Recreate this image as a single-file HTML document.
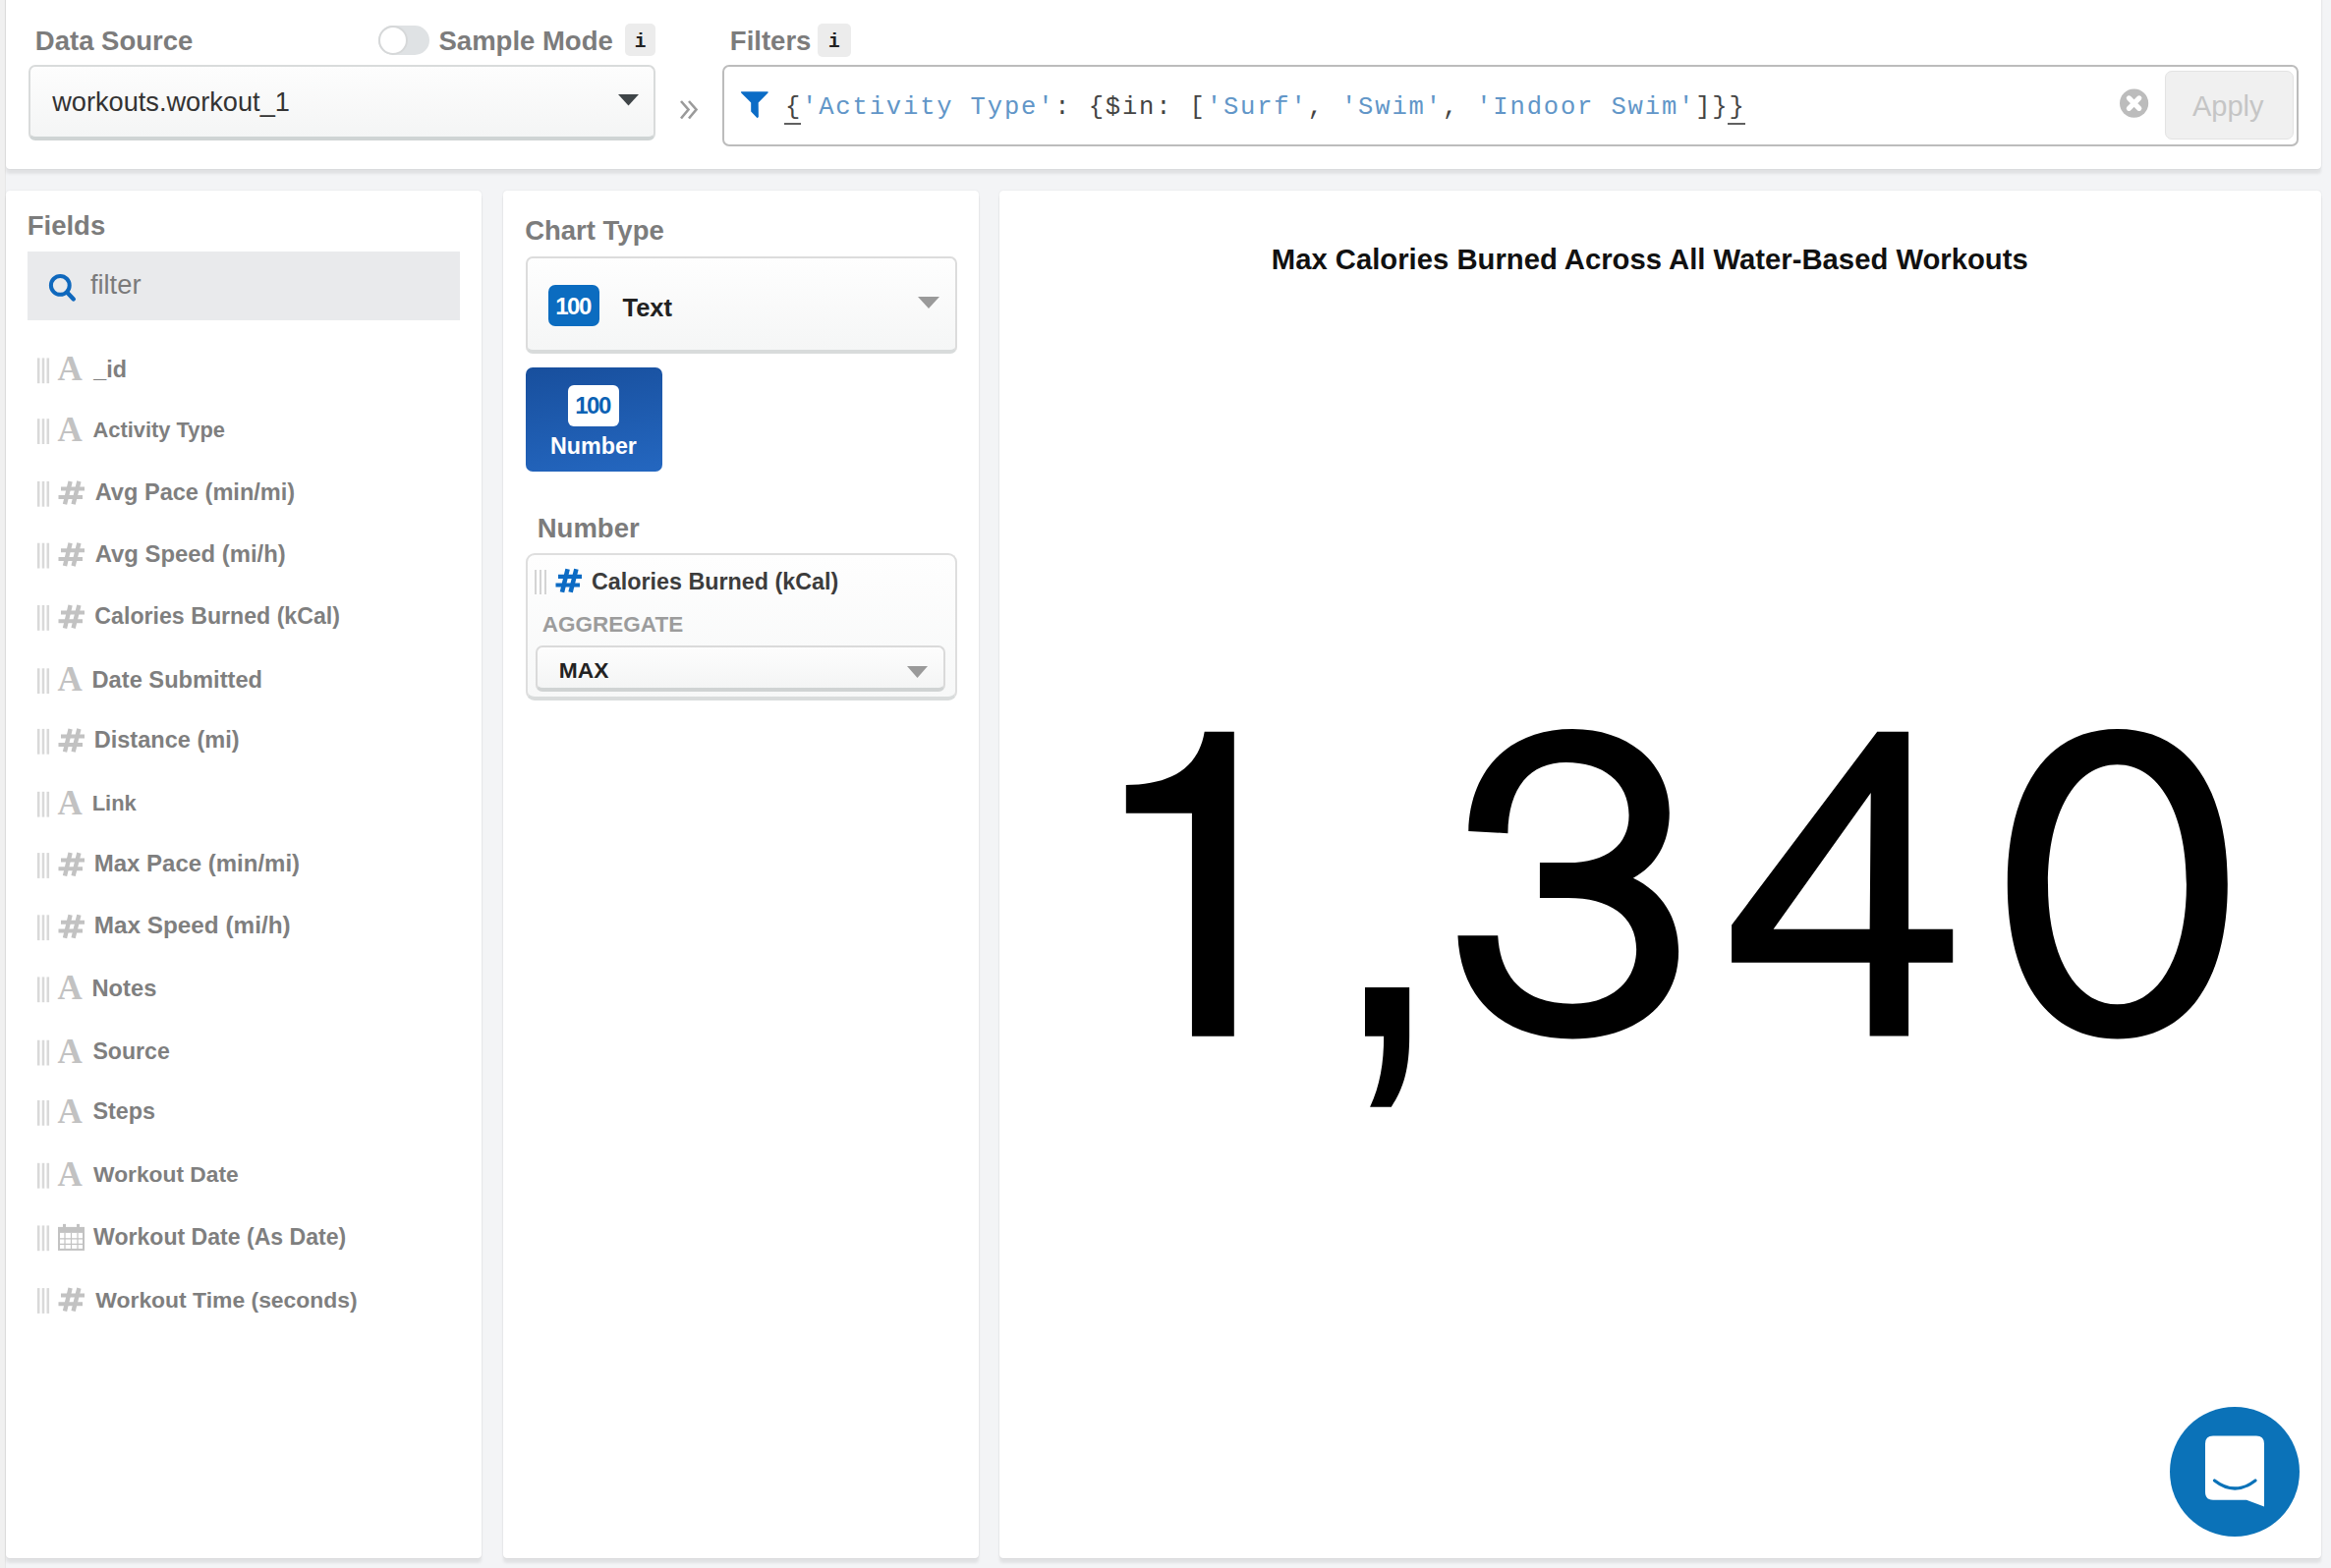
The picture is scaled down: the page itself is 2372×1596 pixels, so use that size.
<!DOCTYPE html><html><head><meta charset="utf-8"><style>
html,body{margin:0;padding:0;width:2372px;height:1596px;overflow:hidden;background:#f3f4f6;}
.t{position:absolute;line-height:0;white-space:pre;}
svg{position:absolute;left:0;top:0;}
</style></head><body>
<div style="position:absolute;left:0px;top:0px;width:5px;height:1596px;background:#f0f0f0;border-right:1px solid #e7e7e7;"></div>
<div style="position:absolute;left:6px;top:-10px;width:2356px;height:182px;background:#fff;border-radius:4px;box-shadow:0 0 1.5px rgba(0,0,0,0.12),0 5px 3px rgba(0,0,0,0.075);"></div>
<div style="position:absolute;left:6px;top:194px;width:484px;height:1392px;background:#fff;border-radius:4px;box-shadow:0 0 1.5px rgba(0,0,0,0.12),0 5px 3px rgba(0,0,0,0.075);"></div>
<div style="position:absolute;left:512px;top:194px;width:484px;height:1392px;background:#fff;border-radius:4px;box-shadow:0 0 1.5px rgba(0,0,0,0.12),0 5px 3px rgba(0,0,0,0.075);"></div>
<div style="position:absolute;left:1017px;top:194px;width:1345px;height:1392px;background:#fff;border-radius:4px;box-shadow:0 0 1.5px rgba(0,0,0,0.12),0 5px 3px rgba(0,0,0,0.075);"></div>
<div class="t" style="left:35.86px;top:42.17px;font-family:'Liberation Sans', sans-serif;font-size:27.5px;font-weight:700;color:#7c7c7c;">Data Source</div>
<div style="position:absolute;left:385px;top:26px;width:52px;height:30px;background:#dfe2e4;border-radius:15px;"></div>
<div style="position:absolute;left:385px;top:26px;width:30px;height:30px;background:#fff;border-radius:50%;box-sizing:border-box;border:2px solid #d6d8d9;"></div>
<div class="t" style="left:446.51px;top:42.17px;font-family:'Liberation Sans', sans-serif;font-size:27.5px;font-weight:700;color:#7c7c7c;">Sample Mode</div>
<div style="position:absolute;left:636px;top:24px;width:31px;height:33px;background:#ececec;border-radius:5px;"></div>
<div class="t" style="left:645.78px;top:42.61px;font-family:'Liberation Mono', monospace;font-size:19.5px;font-weight:700;color:#222;">i</div>
<div style="position:absolute;left:29px;top:66px;width:638px;height:77px;box-sizing:border-box;border:2px solid #d9dbdb;border-bottom:4px solid #cfd4d4;border-radius:7px;background:linear-gradient(#fdfdfd,#f4f5f5);"></div>
<div class="t" style="left:53.14px;top:104.07px;font-family:'Liberation Sans', sans-serif;font-size:27.2px;font-weight:400;color:#333;">workouts.workout_1</div>
<svg width="2372" height="1596" style="pointer-events:none"><polygon points="629,96 650,96 639.5,107.5" fill="#3f4548"/><polyline points="693,103 700.5,111.5 693,120.5" fill="none" stroke="#9a9a9a" stroke-width="2.6"/><polyline points="701,103 708.5,111.5 701,120.5" fill="none" stroke="#9a9a9a" stroke-width="2.6"/></svg>
<div class="t" style="left:742.86px;top:42.17px;font-family:'Liberation Sans', sans-serif;font-size:27.5px;font-weight:700;color:#7c7c7c;">Filters</div>
<div style="position:absolute;left:832px;top:24px;width:34px;height:34px;background:#ececec;border-radius:5px;"></div>
<div class="t" style="left:842.98px;top:42.61px;font-family:'Liberation Mono', monospace;font-size:19.5px;font-weight:700;color:#222;">i</div>
<div style="position:absolute;left:735px;top:66px;width:1604px;height:83px;box-sizing:border-box;border:2px solid #bcbcbc;border-radius:7px;background:#fff;"></div>
<svg width="2372" height="1596"><path d="M754.5,93.2 Q753.5,93.5 754.2,94.6 L764.2,104.4 L764.2,113.6 L770.6,120.2 L771.9,119 L771.7,104.4 L781.5,94.6 Q782.2,93.5 781,93.2 Z" fill="#0b6cc6"/></svg>
<div class="t" style="left:798.92px;top:109.81px;font-family:'Liberation Mono', monospace;font-size:25.5px;font-weight:400;letter-spacing:1.850px"><span style="color:#444">{</span><span style="color:#6196c8">'Activity Type'</span><span style="color:#444">: {$in: [</span><span style="color:#6196c8">'Surf'</span><span style="color:#444">, </span><span style="color:#6196c8">'Swim'</span><span style="color:#444">, </span><span style="color:#6196c8">'Indoor Swim'</span><span style="color:#444">]}}</span></div>
<div style="position:absolute;left:798px;top:125.2px;width:17px;height:2.200000000000003px;background:#606060;"></div>
<div style="position:absolute;left:1758px;top:125.2px;width:18px;height:2.200000000000003px;background:#606060;"></div>
<svg width="2372" height="1596"><circle cx="2171.6" cy="105.1" r="14.6" fill="#bcbcbc"/><path d="M2166.4,99.9 L2176.8,110.3 M2176.8,99.9 L2166.4,110.3" stroke="#fff" stroke-width="5.2" stroke-linecap="round"/></svg>
<div style="position:absolute;left:2203px;top:72px;width:131px;height:69.5px;box-sizing:border-box;border:1px solid #e3e3e3;border-radius:7px;background:#f0f0f0;"></div>
<div class="t" style="left:2230.94px;top:107.65px;font-family:'Liberation Sans', sans-serif;font-size:29px;font-weight:400;color:#c5c5c5;">Apply</div>
<div class="t" style="left:27.76px;top:230.47px;font-family:'Liberation Sans', sans-serif;font-size:27.5px;font-weight:700;color:#7c7c7c;">Fields</div>
<div style="position:absolute;left:28px;top:256px;width:440px;height:70px;background:#e9eaec;"></div>
<svg width="2372" height="1596"><circle cx="61.3" cy="290.4" r="9.4" fill="none" stroke="#0f68bd" stroke-width="4"/><path d="M68.2,297.4 L74.8,304.4" stroke="#0f68bd" stroke-width="4.4" stroke-linecap="round"/></svg>
<div class="t" style="left:91.91px;top:290.24px;font-family:'Liberation Sans', sans-serif;font-size:27.3px;font-weight:400;color:#7a7a7a;">filter</div>
<div class="t" style="left:58.46px;top:376.23px;font-family:'Liberation Serif', serif;font-size:35px;font-weight:700;color:#c2c2c2;">A</div>
<div class="t" style="left:95.33px;top:375.82px;font-family:'Liberation Sans', sans-serif;font-size:23.3px;font-weight:700;color:#7f7f7f;">_id</div>
<div class="t" style="left:58.46px;top:438.03px;font-family:'Liberation Serif', serif;font-size:35px;font-weight:700;color:#c2c2c2;">A</div>
<div class="t" style="left:94.56px;top:438.12px;font-family:'Liberation Sans', sans-serif;font-size:21.85px;font-weight:700;color:#7f7f7f;">Activity Type</div>
<div class="t" style="left:96.71px;top:501.22px;font-family:'Liberation Sans', sans-serif;font-size:23.59px;font-weight:700;color:#7f7f7f;">Avg Pace (min/mi)</div>
<div class="t" style="left:96.71px;top:563.93px;font-family:'Liberation Sans', sans-serif;font-size:23.86px;font-weight:700;color:#7f7f7f;">Avg Speed (mi/h)</div>
<div class="t" style="left:96.35px;top:627.47px;font-family:'Liberation Sans', sans-serif;font-size:23.16px;font-weight:700;color:#7f7f7f;">Calories Burned (kCal)</div>
<div class="t" style="left:58.46px;top:692.13px;font-family:'Liberation Serif', serif;font-size:35px;font-weight:700;color:#c2c2c2;">A</div>
<div class="t" style="left:93.52px;top:691.60px;font-family:'Liberation Sans', sans-serif;font-size:23.66px;font-weight:700;color:#7f7f7f;">Date Submitted</div>
<div class="t" style="left:95.72px;top:753.24px;font-family:'Liberation Sans', sans-serif;font-size:23.55px;font-weight:700;color:#7f7f7f;">Distance (mi)</div>
<div class="t" style="left:58.46px;top:817.63px;font-family:'Liberation Serif', serif;font-size:35px;font-weight:700;color:#c2c2c2;">A</div>
<div class="t" style="left:93.63px;top:817.69px;font-family:'Liberation Sans', sans-serif;font-size:21.96px;font-weight:700;color:#7f7f7f;">Link</div>
<div class="t" style="left:95.69px;top:879.28px;font-family:'Liberation Sans', sans-serif;font-size:24.01px;font-weight:700;color:#7f7f7f;">Max Pace (min/mi)</div>
<div class="t" style="left:95.67px;top:942.37px;font-family:'Liberation Sans', sans-serif;font-size:24.32px;font-weight:700;color:#7f7f7f;">Max Speed (mi/h)</div>
<div class="t" style="left:58.46px;top:1006.23px;font-family:'Liberation Serif', serif;font-size:35px;font-weight:700;color:#c2c2c2;">A</div>
<div class="t" style="left:93.51px;top:1005.68px;font-family:'Liberation Sans', sans-serif;font-size:23.7px;font-weight:700;color:#7f7f7f;">Notes</div>
<div class="t" style="left:58.46px;top:1070.53px;font-family:'Liberation Serif', serif;font-size:35px;font-weight:700;color:#c2c2c2;">A</div>
<div class="t" style="left:94.43px;top:1070.19px;font-family:'Liberation Sans', sans-serif;font-size:23.11px;font-weight:700;color:#7f7f7f;">Source</div>
<div class="t" style="left:58.46px;top:1131.73px;font-family:'Liberation Serif', serif;font-size:35px;font-weight:700;color:#c2c2c2;">A</div>
<div class="t" style="left:94.43px;top:1131.30px;font-family:'Liberation Sans', sans-serif;font-size:23.37px;font-weight:700;color:#7f7f7f;">Steps</div>
<div class="t" style="left:58.46px;top:1195.63px;font-family:'Liberation Serif', serif;font-size:35px;font-weight:700;color:#c2c2c2;">A</div>
<div class="t" style="left:95.08px;top:1195.40px;font-family:'Liberation Sans', sans-serif;font-size:22.78px;font-weight:700;color:#7f7f7f;">Workout Date</div>
<div class="t" style="left:95.08px;top:1258.90px;font-family:'Liberation Sans', sans-serif;font-size:23.07px;font-weight:700;color:#7f7f7f;">Workout Date (As Date)</div>
<div class="t" style="left:97.28px;top:1322.65px;font-family:'Liberation Sans', sans-serif;font-size:22.92px;font-weight:700;color:#7f7f7f;">Workout Time (seconds)</div>
<svg width="2372" height="1596"><rect x="37.9" y="364.4" width="2.6" height="25.8" fill="#d9d9d9"/><rect x="42.7" y="364.4" width="2.6" height="25.8" fill="#d9d9d9"/><rect x="47.5" y="364.4" width="2.6" height="25.8" fill="#d9d9d9"/><rect x="37.9" y="426.2" width="2.6" height="25.8" fill="#d9d9d9"/><rect x="42.7" y="426.2" width="2.6" height="25.8" fill="#d9d9d9"/><rect x="47.5" y="426.2" width="2.6" height="25.8" fill="#d9d9d9"/><rect x="37.9" y="489.9" width="2.6" height="25.8" fill="#d9d9d9"/><rect x="42.7" y="489.9" width="2.6" height="25.8" fill="#d9d9d9"/><rect x="47.5" y="489.9" width="2.6" height="25.8" fill="#d9d9d9"/><path d="M66,513.3 L71.6,489.9 M74.6,513.3 L80.4,489.9" stroke="#c2c2c2" stroke-width="4.4"/><path d="M62,497.4 L86,497.4 M59.5,506.1 L84,506.1" stroke="#c2c2c2" stroke-width="4"/><rect x="37.9" y="552.7" width="2.6" height="25.8" fill="#d9d9d9"/><rect x="42.7" y="552.7" width="2.6" height="25.8" fill="#d9d9d9"/><rect x="47.5" y="552.7" width="2.6" height="25.8" fill="#d9d9d9"/><path d="M66,576.1 L71.6,552.7 M74.6,576.1 L80.4,552.7" stroke="#c2c2c2" stroke-width="4.4"/><path d="M62,560.2 L86,560.2 M59.5,568.9 L84,568.9" stroke="#c2c2c2" stroke-width="4"/><rect x="37.9" y="616.0" width="2.6" height="25.8" fill="#d9d9d9"/><rect x="42.7" y="616.0" width="2.6" height="25.8" fill="#d9d9d9"/><rect x="47.5" y="616.0" width="2.6" height="25.8" fill="#d9d9d9"/><path d="M66,639.4 L71.6,616.0 M74.6,639.4 L80.4,616.0" stroke="#c2c2c2" stroke-width="4.4"/><path d="M62,623.5 L86,623.5 M59.5,632.2 L84,632.2" stroke="#c2c2c2" stroke-width="4"/><rect x="37.9" y="680.3" width="2.6" height="25.8" fill="#d9d9d9"/><rect x="42.7" y="680.3" width="2.6" height="25.8" fill="#d9d9d9"/><rect x="47.5" y="680.3" width="2.6" height="25.8" fill="#d9d9d9"/><rect x="37.9" y="741.9" width="2.6" height="25.8" fill="#d9d9d9"/><rect x="42.7" y="741.9" width="2.6" height="25.8" fill="#d9d9d9"/><rect x="47.5" y="741.9" width="2.6" height="25.8" fill="#d9d9d9"/><path d="M66,765.3 L71.6,741.9 M74.6,765.3 L80.4,741.9" stroke="#c2c2c2" stroke-width="4.4"/><path d="M62,749.4 L86,749.4 M59.5,758.1 L84,758.1" stroke="#c2c2c2" stroke-width="4"/><rect x="37.9" y="805.8" width="2.6" height="25.8" fill="#d9d9d9"/><rect x="42.7" y="805.8" width="2.6" height="25.8" fill="#d9d9d9"/><rect x="47.5" y="805.8" width="2.6" height="25.8" fill="#d9d9d9"/><rect x="37.9" y="868.1" width="2.6" height="25.8" fill="#d9d9d9"/><rect x="42.7" y="868.1" width="2.6" height="25.8" fill="#d9d9d9"/><rect x="47.5" y="868.1" width="2.6" height="25.8" fill="#d9d9d9"/><path d="M66,891.5 L71.6,868.1 M74.6,891.5 L80.4,868.1" stroke="#c2c2c2" stroke-width="4.4"/><path d="M62,875.6 L86,875.6 M59.5,884.3 L84,884.3" stroke="#c2c2c2" stroke-width="4"/><rect x="37.9" y="931.3" width="2.6" height="25.8" fill="#d9d9d9"/><rect x="42.7" y="931.3" width="2.6" height="25.8" fill="#d9d9d9"/><rect x="47.5" y="931.3" width="2.6" height="25.8" fill="#d9d9d9"/><path d="M66,954.7 L71.6,931.3 M74.6,954.7 L80.4,931.3" stroke="#c2c2c2" stroke-width="4.4"/><path d="M62,938.8 L86,938.8 M59.5,947.5 L84,947.5" stroke="#c2c2c2" stroke-width="4"/><rect x="37.9" y="994.4" width="2.6" height="25.8" fill="#d9d9d9"/><rect x="42.7" y="994.4" width="2.6" height="25.8" fill="#d9d9d9"/><rect x="47.5" y="994.4" width="2.6" height="25.8" fill="#d9d9d9"/><rect x="37.9" y="1058.7" width="2.6" height="25.8" fill="#d9d9d9"/><rect x="42.7" y="1058.7" width="2.6" height="25.8" fill="#d9d9d9"/><rect x="47.5" y="1058.7" width="2.6" height="25.8" fill="#d9d9d9"/><rect x="37.9" y="1119.9" width="2.6" height="25.8" fill="#d9d9d9"/><rect x="42.7" y="1119.9" width="2.6" height="25.8" fill="#d9d9d9"/><rect x="47.5" y="1119.9" width="2.6" height="25.8" fill="#d9d9d9"/><rect x="37.9" y="1183.8" width="2.6" height="25.8" fill="#d9d9d9"/><rect x="42.7" y="1183.8" width="2.6" height="25.8" fill="#d9d9d9"/><rect x="47.5" y="1183.8" width="2.6" height="25.8" fill="#d9d9d9"/><rect x="37.9" y="1247.4" width="2.6" height="25.8" fill="#d9d9d9"/><rect x="42.7" y="1247.4" width="2.6" height="25.8" fill="#d9d9d9"/><rect x="47.5" y="1247.4" width="2.6" height="25.8" fill="#d9d9d9"/><rect x="60" y="1249.9" width="25" height="22" fill="none" stroke="#c2c2c2" stroke-width="2"/><rect x="60" y="1249.9" width="25" height="5" fill="#c2c2c2"/><path d="M66,1254.9 V1271.9 M72.5,1254.9 V1271.9 M79,1254.9 V1271.9 M60,1260.9 H85 M60,1266.4 H85" stroke="#c2c2c2" stroke-width="1.2"/><rect x="64" y="1245.9" width="3" height="7" fill="#c2c2c2"/><rect x="78" y="1245.9" width="3" height="7" fill="#c2c2c2"/><rect x="37.9" y="1311.1" width="2.6" height="25.8" fill="#d9d9d9"/><rect x="42.7" y="1311.1" width="2.6" height="25.8" fill="#d9d9d9"/><rect x="47.5" y="1311.1" width="2.6" height="25.8" fill="#d9d9d9"/><path d="M66,1334.5 L71.6,1311.1 M74.6,1334.5 L80.4,1311.1" stroke="#c2c2c2" stroke-width="4.4"/><path d="M62,1318.6 L86,1318.6 M59.5,1327.3 L84,1327.3" stroke="#c2c2c2" stroke-width="4"/></svg>
<div class="t" style="left:534.17px;top:234.77px;font-family:'Liberation Sans', sans-serif;font-size:27.5px;font-weight:700;color:#7c7c7c;">Chart Type</div>
<div style="position:absolute;left:534.5px;top:260.5px;width:439.0px;height:99.5px;box-sizing:border-box;border:2px solid #dcdcdc;border-bottom:4px solid #d8dbdb;border-radius:7px;background:linear-gradient(#fefefe,#f5f6f6);"></div>
<div style="position:absolute;left:558px;top:290px;width:52px;height:42px;background:#0b6cc0;border-radius:7px;"></div>
<div class="t" style="left:565.21px;top:312.18px;font-family:'Liberation Sans', sans-serif;font-size:24px;font-weight:700;color:#fff;letter-spacing:-1.5px;">100</div>
<div class="t" style="left:633.51px;top:312.76px;font-family:'Liberation Sans', sans-serif;font-size:25.5px;font-weight:700;color:#222;">Text</div>
<svg width="2372" height="1596"><polygon points="934,302 956,302 945,314" fill="#9a9a9a"/></svg>
<div style="position:absolute;left:534.5px;top:374px;width:139.0px;height:105.5px;border-radius:7px;background:linear-gradient(170deg,#184f9d,#2467c0);"></div>
<div style="position:absolute;left:578px;top:392px;width:52px;height:42px;background:#fff;border-radius:6px;"></div>
<div class="t" style="left:585.21px;top:413.18px;font-family:'Liberation Sans', sans-serif;font-size:24px;font-weight:700;color:#0b62b4;letter-spacing:-1.5px;">100</div>
<div class="t" style="left:559.88px;top:454.12px;font-family:'Liberation Sans', sans-serif;font-size:23.3px;font-weight:700;color:#fff;">Number</div>
<div class="t" style="left:546.76px;top:538.47px;font-family:'Liberation Sans', sans-serif;font-size:27.5px;font-weight:700;color:#7c7c7c;">Number</div>
<div style="position:absolute;left:534.5px;top:563px;width:439.0px;height:150px;box-sizing:border-box;border:2px solid #dedede;border-bottom:4px solid #d9dcdc;border-radius:9px;background:linear-gradient(#fefefe,#f7f8f8);"></div>
<svg width="2372" height="1596"><rect x="544" y="580" width="2" height="25" fill="#d4d4d4"/><rect x="549" y="580" width="2" height="25" fill="#d4d4d4"/><rect x="554" y="580" width="2" height="25" fill="#d4d4d4"/><g transform="translate(506,0)"><path d="M66,602.7 L71.6,579.3 M74.6,602.7 L80.4,579.3" stroke="#0c6bc4" stroke-width="4.6"/><path d="M62,586.8 L86,586.8 M59.5,595.5 L84,595.5" stroke="#0c6bc4" stroke-width="4.2"/></g><polygon points="923,678 944,678 933.5,690" fill="#9a9a9a"/></svg>
<div class="t" style="left:602.04px;top:592.32px;font-family:'Liberation Sans', sans-serif;font-size:23.3px;font-weight:700;color:#3c3c3c;">Calories Burned (kCal)</div>
<div class="t" style="left:551.84px;top:636.10px;font-family:'Liberation Sans', sans-serif;font-size:22.5px;font-weight:700;color:#9c9c9c;">AGGREGATE</div>
<div style="position:absolute;left:544.5px;top:656.5px;width:417.0px;height:47.5px;box-sizing:border-box;border:2px solid #dadada;border-bottom:4px solid #d0d3d3;border-radius:7px;background:linear-gradient(#fdfdfd,#f4f5f5);"></div>
<svg width="2372" height="1596"><polygon points="923,678 944,678 933.5,690" fill="#9a9a9a"/></svg>
<div class="t" style="left:568.77px;top:681.70px;font-family:'Liberation Sans', sans-serif;font-size:22.8px;font-weight:700;color:#222;">MAX</div>
<div class="t" style="left:1293.84px;top:264.16px;font-family:'Liberation Sans', sans-serif;font-size:29.25px;font-weight:700;color:#111;">Max Calories Burned Across All Water-Based Workouts</div>
<svg width="2372" height="1596" fill="#000"><g transform="translate(1130,730) scale(0.25517)"><path d="M375,58 L493,58 L493,1273 L325,1273 L325,383 L62,383 L62,270 C230,270 350,210 375,58 Z"/><path d="M1015,1078 L1192,1078 L1192,1273 C1192,1400 1170,1480 1120,1555 L1035,1555 C1075,1470 1090,1380 1090,1273 L1015,1273 Z"/></g><g transform="translate(1470,730) scale(0.21685)"><path d="M112,535 C118,250 300,55 600,55 C880,55 1055,230 1055,450 C1055,590 990,700 885,755 C1020,820 1098,940 1098,1100 C1098,1360 880,1510 600,1510 C280,1510 75,1330 62,1025 L250,1025 C262,1230 380,1345 600,1345 C790,1345 900,1235 900,1090 C900,930 770,848 580,848 L447,848 L447,683 L580,683 C760,683 865,600 865,460 C865,300 740,212 570,212 C400,212 300,330 297,545 Z"/></g><g transform="translate(1740,730) scale(0.21685)"><path fill-rule="evenodd" d="M785,68 L932,68 L932,995 L1140,995 L1140,1152 L932,1152 L932,1497 L750,1497 L750,1152 L102,1152 L102,975 Z M298,995 L750,995 L755,355 Z"/></g><g transform="translate(2020,730) scale(0.21685)"><path fill-rule="evenodd" d="M621.5,55.0 C946.895,55.0 1138.0,324.175 1138.0,782.5 C1138.0,1240.825 946.895,1510.0 621.5,1510.0 C296.105,1510.0 105.0,1240.825 105.0,782.5 C105.0,324.175 296.105,55.0 621.5,55.0 Z M620,222 C815.0,222 945,447.2 945,785 C945,1122.8 815.0,1348 620,1348 C425.0,1348 295,1122.8 295,785 C295,447.2 425.0,222 620,222 Z"/></g></svg>
<svg width="2372" height="1596"><circle cx="2274" cy="1498" r="66" fill="#0b72b8"/><path d="M2252,1461.5 L2296,1461.5 Q2304,1461.5 2304,1469.5 L2304,1533.5 L2286,1526.7 L2252,1526.7 Q2244,1526.7 2244,1518.7 L2244,1469.5 Q2244,1461.5 2252,1461.5 Z" fill="#fff"/><path d="M2253.5,1507 Q2274,1523 2295,1507" fill="none" stroke="#0b72b8" stroke-width="3.2" stroke-linecap="round"/></svg>
</body></html>
